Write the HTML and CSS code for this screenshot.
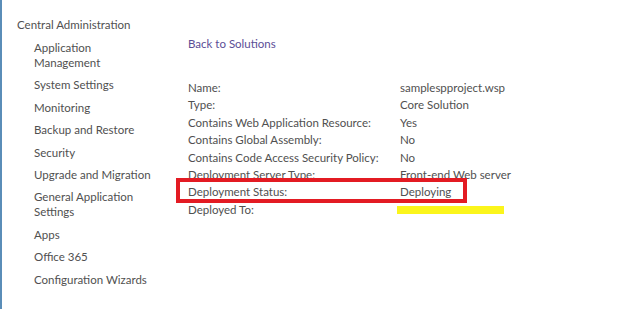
FILE: index.html
```html
<!DOCTYPE html>
<html lang="en">
<head>
  <meta charset="UTF-8" />
  <title>Solution Properties</title>
  <link rel="stylesheet" href="styles.css">
</head>
<body>
  <div class="page">
    <nav class="sidebar">
      <div class="nav-root">Central Administration</div>
      <ul class="nav-list">
        <li>Application Management</li>
        <li>System Settings</li>
        <li>Monitoring</li>
        <li>Backup and Restore</li>
        <li>Security</li>
        <li>Upgrade and Migration</li>
        <li>General Application Settings</li>
        <li>Apps</li>
        <li>Office 365</li>
        <li>Configuration Wizards</li>
      </ul>
    </nav>

    <main class="content">
      <a class="back" href="#">Back to Solutions</a>

      <div class="props">
        <div class="row"><span>Name:</span><span>samplespproject.wsp</span></div>
        <div class="row"><span>Type:</span><span>Core Solution</span></div>
        <div class="row"><span>Contains Web Application Resource:</span><span>Yes</span></div>
        <div class="row"><span>Contains Global Assembly:</span><span>No</span></div>
        <div class="row"><span>Contains Code Access Security Policy:</span><span>No</span></div>
        <div class="row"><span>Deployment Server Type:</span><span>Front-end Web server</span></div>
        <div class="row marked"><span>Deployment Status:</span><span>Deploying</span></div>
        <div class="row"><span>Deployed To:</span><span class="redacted"></span></div>
      </div>
    </main>
  </div>
</body>
</html>
```

FILE: styles.css
```css
:root {
  --text: #505050;
  --link: #5b4e96;
  --edge: #5a8db8;
  --mark: #e31b23;
  --hide: #fbf51c;
}

* {
  box-sizing: border-box;
}

body {
  margin: 0;
  font-family: Lato, sans-serif;
  font-size: 11.5px;
  color: var(--text);
  background: #fff;
}

.page {
  display: flex;
  height: 309px;
  border-left: 2px solid var(--edge);
}

.sidebar {
  width: 186px;
  padding: 17px 0 0 15px;
}

.nav-root {
  line-height: 15px;
  margin-bottom: 8px;
}

.nav-list {
  list-style: none;
  margin: 0;
  padding: 0 0 0 17px;
  display: flex;
  flex-direction: column;
  gap: 7.4px;
}

.nav-list li {
  line-height: 15px;
  width: 120px;
}

.content {
  flex: 1;
  padding-top: 36px;
}

.back {
  display: block;
  color: var(--link);
  text-decoration: none;
  line-height: 15px;
  margin-bottom: 28px;
}

.row {
  display: grid;
  grid-template-columns: 212px auto;
  line-height: 17.4px;
  position: relative;
}

.marked::after {
  content: "";
  box-sizing: border-box;
  position: absolute;
  left: -12px;
  top: -5px;
  width: 291px;
  height: 25px;
  border: 4px solid var(--mark);
}

.redacted {
  display: block;
  width: 107px;
  height: 8px;
  margin-top: 5px;
  margin-left: -3px;
  background: var(--hide);
}
```
